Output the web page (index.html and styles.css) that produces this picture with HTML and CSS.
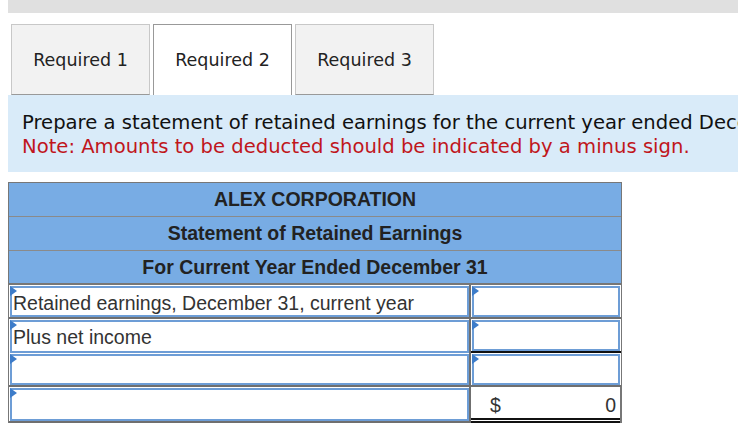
FILE: index.html
```html
<!DOCTYPE html>
<html>
<head>
<meta charset="utf-8">
<link rel="stylesheet" href="styles.css">
</head>
<body>
<div class="page">
  <div class="topbar"></div>
  <div class="tabs">
    <div class="tab">Required 1</div>
    <div class="tab active">Required 2</div>
    <div class="tab">Required 3</div>
  </div>
  <div class="instructions">
    <div class="line">Prepare a statement of retained earnings for the current year ended December 31.</div>
    <div class="note">Note: Amounts to be deducted should be indicated by a minus sign.</div>
  </div>
  <div class="sheet">
    <div class="hrow">ALEX CORPORATION</div>
    <div class="hrow">Statement of Retained Earnings</div>
    <div class="hrow">For Current Year Ended December 31</div>
    <div class="drow">
      <div class="cell left"><div class="inp"><span class="flag"></span>Retained earnings, December 31, current year</div></div>
      <div class="cell right"><div class="inp"><span class="flag"></span></div></div>
    </div>
    <div class="drow">
      <div class="cell left"><div class="inp"><span class="flag"></span>Plus net income</div></div>
      <div class="cell right under"><div class="inp"><span class="flag"></span></div></div>
    </div>
    <div class="drow">
      <div class="cell left"><div class="inp"><span class="flag"></span></div></div>
      <div class="cell right"><div class="inp"><span class="flag"></span></div></div>
    </div>
    <div class="drow last">
      <div class="cell left"><div class="inp"><span class="flag"></span></div></div>
      <div class="cell right total"><span class="dollar">$</span><span class="amt">0</span></div>
    </div>
  </div>
</div>
</body>
</html>
```
FILE: styles.css
```css
html, body {
  margin: 0;
  padding: 0;
  background: #ffffff;
  overflow: hidden;
}
.page {
  width: 760px;
  padding-left: 8px;
}
.topbar {
  height: 13px;
  background: #e0e0e0;
}
.tabs {
  display: flex;
  gap: 3px;
  margin-top: 11px;
  padding-left: 3px;
  height: 71px;
}
.tab {
  width: 137px;
  height: 69px;
  border: 1px solid #c8c8c8;
  border-bottom-color: #999;
  background: #f2f2f2;
  display: flex;
  align-items: center;
  justify-content: center;
  font-family: "DejaVu Sans", Verdana, sans-serif;
  font-size: 17.5px;
  color: #222;
}
.tab.active {
  background: #ffffff;
  border-color: #999;
  border-bottom: none;
  height: 70px;
}
.instructions {
  background: #d9ebf9;
  height: 77px;
  padding: 16px 0 0 14px;
  box-sizing: border-box;
  font-family: "DejaVu Sans", Verdana, sans-serif;
  font-size: 19.6px;
  line-height: 24px;
  white-space: nowrap;
  overflow: hidden;
  width: 730px;
}
.line { color: #111; }
.note { color: #c0161c; }
.sheet {
  margin-top: 10px;
  width: 614px;
  box-sizing: border-box;
  border: 1px solid #777;
  border-bottom: none;
  font-family: "Liberation Sans", Arial, sans-serif;
  color: #222;
}
.hrow {
  background: #78ace4;
  height: 34px;
  box-sizing: border-box;
  border-bottom: 1px solid #8a8a8a;
  display: flex;
  align-items: center;
  justify-content: center;
  font-weight: bold;
  font-size: 19.5px;
}
.hrow:nth-child(3) { border-bottom: 2px solid #777; }
.drow {
  display: flex;
  height: 34px;
  box-sizing: border-box;
  border-bottom: 2px solid #6f6f6f;
}
.drow.last { border-bottom: none; height: 36px; }
.cell {
  box-sizing: border-box;
  display: flex;
  padding: 1px 0 0 0;
}
.cell.left {
  width: 462px;
  border-right: 2px solid #6f6f6f;
  padding-left: 1px;
}
.cell.right {
  flex: 1;
  padding-left: 1px;
  padding-right: 1px;
}
.inp {
  position: relative;
  flex: 1;
  box-sizing: border-box;
  border: 2px solid #6d9dd6;
  background: #fff;
  font-size: 19.5px;
  color: #333;
  padding-left: 1px;
  line-height: 31px;
  white-space: nowrap;
  overflow: visible;
}
.flag {
  position: absolute;
  left: -2px;
  top: -2px;
  width: 0;
  height: 0;
  border-top: 5px solid transparent;
  border-bottom: 5px solid transparent;
  border-left: 7px solid #3d7cc9;
}
.cell.under {
  border-bottom: 2px solid #111;
}
.drow:has(.under) { border-bottom: none; }
.cell.total {
  padding: 0 4px 0 19px;
  align-items: center;
  justify-content: space-between;
  font-size: 19.5px;
  color: #333;
  position: relative;
  border-right: 1px solid #777;
}
.cell.total::after {
  content: "";
  position: absolute;
  left: 0;
  right: 0;
  bottom: 0;
  height: 1px;
  border-top: 2px solid #111;
  border-bottom: 2px solid #111;
}
.drow.last .cell.left { border-bottom: 2px solid #6f6f6f; }
```
